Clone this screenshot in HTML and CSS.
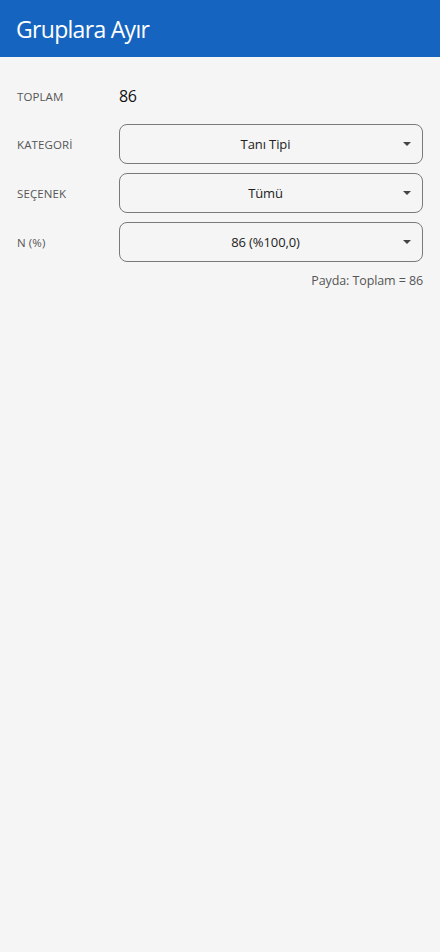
FILE: index.html
```html
<!DOCTYPE html>
<html lang="tr">
<head>
  <meta charset="UTF-8">
  <meta name="viewport" content="width=device-width, initial-scale=1">
  <title>Gruplara Ayır</title>
  <link rel="stylesheet" href="styles.css">
</head>
<body>
  <header class="app-bar">
    <h1>Gruplara Ayır</h1>
  </header>

  <main class="content">
    <div class="form-grid">
      <div class="label">TOPLAM</div>
      <div class="total-value">86</div>

      <div class="label">KATEGORİ</div>
      <div class="select">
        <span class="select-text">Tanı Tipi</span>
        <svg class="arrow" width="8" height="4" viewBox="0 0 8 4"><path d="M0 0h8L4 4z"/></svg>
      </div>

      <div class="label">SEÇENEK</div>
      <div class="select">
        <span class="select-text">Tümü</span>
        <svg class="arrow" width="8" height="4" viewBox="0 0 8 4"><path d="M0 0h8L4 4z"/></svg>
      </div>

      <div class="label">N (%)</div>
      <div class="select">
        <span class="select-text">86 (%100,0)</span>
        <svg class="arrow" width="8" height="4" viewBox="0 0 8 4"><path d="M0 0h8L4 4z"/></svg>
      </div>
    </div>

    <p class="note">Payda: Toplam = 86</p>
  </main>
</body>
</html>
```

FILE: styles.css
```css
/* page base */
body {
  margin: 0;
  font-family: 'Open Sans', 'Noto Sans', sans-serif;
  background: #f5f5f5;
  min-height: 100vh;
}

/* top bar */
.app-bar {
  background: #1565c0;
  height: 57px;
  display: flex;
  align-items: center;
  padding: 0 16px;
  box-sizing: border-box;
}
.app-bar h1 {
  margin: 0;
  color: #fff;
  font-size: 23px;
  font-weight: 400;
  letter-spacing: -0.7px;
}

/* form rows */
.content {
  padding: 20px 17px 0;
}
.form-grid {
  display: grid;
  grid-template-columns: 102px 1fr;
  grid-auto-rows: 40px;
  grid-template-rows: 38px;
  row-gap: 9px;
  align-items: center;
}
.label {
  font-size: 11.5px;
  color: #555;
  letter-spacing: 0.1px;
}
.total-value {
  font-size: 16px;
  color: #111;
  letter-spacing: -0.3px;
}
.select {
  height: 40px;
  box-sizing: border-box;
  border: 1px solid #7a7a7a;
  border-radius: 8px;
  display: flex;
  align-items: center;
  padding: 0 11px 0 16px;
  font-size: 13px;
  color: #222;
}
.select-text {
  flex: 1;
  text-align: center;
  letter-spacing: -0.1px;
}
.select .arrow {
  flex: none;
  margin-left: 8px;
  fill: #444;
}

.note {
  margin: 10px 0 0;
  text-align: right;
  font-size: 12.5px;
  color: #555;
  letter-spacing: -0.1px;
}
```
